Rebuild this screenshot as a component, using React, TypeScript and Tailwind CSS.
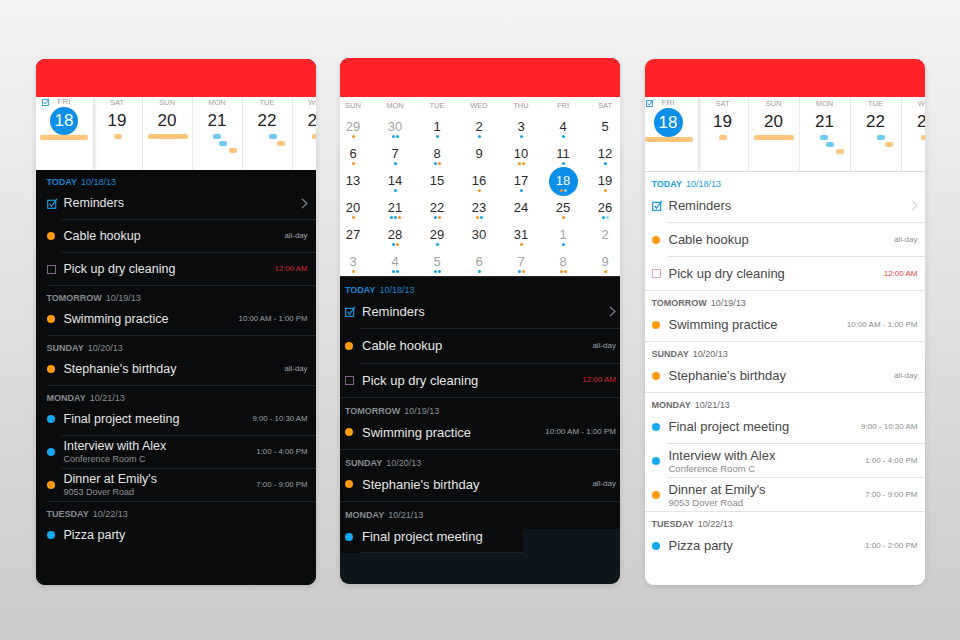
import React from 'react';

type Theme = 'dark' | 'light';
type Mark = 'orange' | 'blue' | 'check' | 'box';

interface Item {
  mark: Mark;
  title: string;
  sub?: string;
  time?: string;
  alarm?: boolean;
  chevron?: boolean;
}

interface Section {
  day: string;
  date: string;
  today?: boolean;
  items: Item[];
}

interface ListStyle {
  theme: Theme;
  pad: string;
  full: string;
  inset: string;
  rowH: string;
  head: string;
  title: string;
  sub: string;
  time: string;
}

const AGENDA: Section[] = [
  {
    day: 'TODAY',
    date: '10/18/13',
    today: true,
    items: [
      { mark: 'check', title: 'Reminders', chevron: true },
      { mark: 'orange', title: 'Cable hookup', time: 'all-day' },
      { mark: 'box', title: 'Pick up dry cleaning', time: '12:00 AM', alarm: true },
    ],
  },
  { day: 'TOMORROW', date: '10/19/13', items: [{ mark: 'orange', title: 'Swimming practice', time: '10:00 AM - 1:00 PM' }] },
  { day: 'SUNDAY', date: '10/20/13', items: [{ mark: 'orange', title: "Stephanie's birthday", time: 'all-day' }] },
  {
    day: 'MONDAY',
    date: '10/21/13',
    items: [
      { mark: 'blue', title: 'Final project meeting', time: '9:00 - 10:30 AM' },
      { mark: 'blue', title: 'Interview with Alex', sub: 'Conference Room C', time: '1:00 - 4:00 PM' },
      { mark: 'orange', title: "Dinner at Emily's", sub: '9053 Dover Road', time: '7:00 - 9:00 PM' },
    ],
  },
  { day: 'TUESDAY', date: '10/22/13', items: [{ mark: 'blue', title: 'Pizza party', time: '1:00 - 2:00 PM' }] },
];

// the dark week view cuts the last time off
const AGENDA_LEFT: Section[] = AGENDA.map((s, i) =>
  i === AGENDA.length - 1 ? { ...s, items: [{ mark: 'blue', title: 'Pizza party' }] } : s
);

const LEFT: ListStyle = {
  theme: 'dark',
  pad: 'pl-[11px] pr-[8px]',
  full: 'ml-[11px]',
  inset: 'ml-[26px]',
  rowH: 'h-[32px]',
  head: 'h-[17px] pt-[7px] pl-[11px]',
  title: 'text-[12.5px]',
  sub: 'text-[9px]',
  time: 'text-[7.8px]',
};

const MID: ListStyle = {
  theme: 'dark',
  pad: 'pl-[5px] pr-[4px]',
  full: 'ml-0',
  inset: 'ml-[20px]',
  rowH: 'h-[33.5px]',
  head: 'h-[17.5px] pt-[7.5px] pl-[5px]',
  title: 'text-[13px]',
  sub: 'text-[9.5px]',
  time: 'text-[8px]',
};

const RIGHT: ListStyle = {
  theme: 'light',
  pad: 'pl-[7px] pr-[7px]',
  full: 'ml-0',
  inset: 'ml-[22px]',
  rowH: 'h-[33px]',
  head: 'h-[17px] pt-[7px] pl-[7px]',
  title: 'text-[13px]',
  sub: 'text-[9.5px]',
  time: 'text-[8px]',
};

interface Chip {
  c: 'o' | 'b';
  x: number;
  w: number;
  r: number;
}

interface WeekDay {
  label: string;
  num: number;
  chips: Chip[];
}

const WEEK: WeekDay[] = [
  { label: 'SAT', num: 19, chips: [{ c: 'o', x: 21, w: 8, r: 0 }] },
  { label: 'SUN', num: 20, chips: [{ c: 'o', x: 5, w: 40, r: 0 }] },
  {
    label: 'MON',
    num: 21,
    chips: [
      { c: 'b', x: 20, w: 8, r: 0 },
      { c: 'b', x: 26, w: 8, r: 1 },
      { c: 'o', x: 36, w: 8, r: 2 },
    ],
  },
  {
    label: 'TUE',
    num: 22,
    chips: [
      { c: 'b', x: 26, w: 8, r: 0 },
      { c: 'o', x: 34, w: 8, r: 1 },
    ],
  },
  {
    label: 'WED',
    num: 23,
    chips: [
      { c: 'o', x: 19, w: 8, r: 0 },
      { c: 'b', x: 24, w: 8, r: 1 },
    ],
  },
];

// [day, dots, muted?, selected?]  o = orange, b = blue, l = pale blue
type Cell = [number, string, number?, number?];

const MONTH: Cell[][] = [
  [[29, 'o', 1], [30, 'bb', 1], [1, 'b'], [2, 'b'], [3, 'b'], [4, 'b'], [5, '']],
  [[6, 'o'], [7, 'b'], [8, 'bo'], [9, ''], [10, 'oo'], [11, 'b'], [12, 'b']],
  [[13, ''], [14, 'b'], [15, ''], [16, 'o'], [17, 'b'], [18, 'ol', 0, 1], [19, 'o']],
  [[20, 'o'], [21, 'bbo'], [22, 'bo'], [23, 'ob'], [24, ''], [25, 'o'], [26, 'bl']],
  [[27, ''], [28, 'bo'], [29, 'b'], [30, ''], [31, 'o'], [1, 'b', 1], [2, '', 1]],
  [[3, 'o', 1], [4, 'bb', 1], [5, 'bb', 1], [6, 'b', 1], [7, 'bo', 1], [8, 'oo', 1], [9, 'o', 1]],
];

const WEEKDAYS = ['SUN', 'MON', 'TUE', 'WED', 'THU', 'FRI', 'SAT'];

const DOT_COLOR: Record<string, string> = {
  o: 'bg-[#f7951d]',
  b: 'bg-[#0ea5ec]',
  l: 'bg-[#8fd3f4]',
};

function CheckIcon({ size = 11 }: { size?: number }) {
  return (
    <svg width={size} height={size} viewBox="0 0 11 11" className="block">
      <rect x="0.7" y="2.3" width="8" height="8" fill="none" stroke="#1b93dc" strokeWidth="1.2" />
      <path d="M2.6 5.9 L4.5 8.3 L9.9 0.9" fill="none" stroke="#1b93dc" strokeWidth="1.3" />
    </svg>
  );
}

function MarkIcon({ mark, theme }: { mark: Mark; theme: Theme }) {
  if (mark === 'orange') return <span className="block w-[8px] h-[8px] rounded-full bg-[#fd9a0e]" />;
  if (mark === 'blue') return <span className="block w-[8px] h-[8px] rounded-full bg-[#13a8f0]" />;
  if (mark === 'check') return <CheckIcon />;
  return (
    <span
      className={`block w-[9px] h-[9px] border border-solid ${theme === 'dark' ? 'border-[#7d6480]' : 'border-[#dba3c6]'}`}
    />
  );
}

function Row({ item, s, sep }: { item: Item; s: ListStyle; sep: 'inset' | 'full' | 'none' }) {
  const dark = s.theme === 'dark';
  const line = dark ? 'bg-[#1b242b]' : 'bg-[#e3e3e3]';
  return (
    <div>
      <div className={`flex items-center ${s.rowH} ${s.pad}`}>
        <div className="w-[17px] shrink-0 flex items-center">
          <MarkIcon mark={item.mark} theme={s.theme} />
        </div>
        <div className="flex-1 min-w-0 flex flex-col justify-center">
          <div className={`${s.title} leading-[15px] whitespace-nowrap ${dark ? 'text-[#e6e6e6]' : 'text-[#474747]'}`}>
            {item.title}
          </div>
          {item.sub && (
            <div className={`${s.sub} leading-[11px] whitespace-nowrap ${dark ? 'text-[#8e9297]' : 'text-[#8a8a8a]'}`}>
              {item.sub}
            </div>
          )}
        </div>
        {item.time && (
          <div
            className={`${s.time} whitespace-nowrap ${
              item.alarm ? (dark ? 'text-[#d8262b]' : 'text-[#ea3a3f]') : dark ? 'text-[#9ea2a7]' : 'text-[#8d8d8d]'
            }`}
          >
            {item.time}
          </div>
        )}
        {item.chevron && (
          <svg width="7" height="11" viewBox="0 0 7 11" className="block">
            <path
              d="M1 0.8 L6 5.5 L1 10.2"
              fill="none"
              stroke={dark ? '#8c8f93' : '#d2d2d2'}
              strokeWidth="1.1"
            />
          </svg>
        )}
      </div>
      {sep === 'inset' && <div className={`h-px ${s.inset} ${line}`} />}
      {sep === 'full' && <div className={`h-px ${s.full} ${line}`} />}
    </div>
  );
}

function Header({ sec, s }: { sec: Section; s: ListStyle }) {
  const dark = s.theme === 'dark';
  const color = sec.today
    ? dark
      ? 'text-[#1685d2]'
      : 'text-[#1ca0e0]'
    : dark
      ? 'text-[#868b91]'
      : 'text-[#6b6b6b]';
  return (
    <div className={`${s.head} text-[9px] leading-[10px] whitespace-nowrap ${color}`}>
      <span className="font-bold">{sec.day}</span>
      <span className="ml-[4px]">{sec.date}</span>
    </div>
  );
}

function Agenda({ sections, s, endSep }: { sections: Section[]; s: ListStyle; endSep?: boolean }) {
  return (
    <div>
      {sections.map((sec, si) => (
        <div key={sec.day}>
          <Header sec={sec} s={s} />
          {sec.items.map((item, ii) => {
            const lastItem = ii === sec.items.length - 1;
            const lastSec = si === sections.length - 1;
            const sep = !lastItem ? 'inset' : !lastSec || endSep ? 'full' : 'none';
            return <Row key={item.title} item={item} s={s} sep={sep} />;
          })}
        </div>
      ))}
    </div>
  );
}

function Chips({ chips }: { chips: Chip[] }) {
  return (
    <div className="flex flex-col gap-[2px]">
      {[0, 1, 2].map((r) => (
        <div key={r} className="flex h-[5px]">
          {chips
            .filter((c) => c.r === r)
            .map((c, i) => (
              <span
                key={i}
                style={{ marginLeft: c.x, width: c.w }}
                className={`block h-[5px] rounded-[2px] ${c.c === 'o' ? 'bg-[#fdc57b]' : 'bg-[#6fcbf3]'}`}
              />
            ))}
        </div>
      ))}
    </div>
  );
}

function WeekStrip({ light }: { light?: boolean }) {
  return (
    <div className={`flex shrink-0 bg-white overflow-hidden ${light ? 'h-[75px] border-b border-[#dedede]' : 'h-[73px]'}`}>
      <div
        className={`relative z-10 shrink-0 h-full bg-white flex flex-col items-center shadow-[2px_0_3px_rgba(0,0,0,0.13)] ${
          light ? 'w-[53px] pr-[6px]' : 'w-[57px]'
        }`}
      >
        <div className={`absolute ${light ? 'left-[1px] top-[2px]' : 'left-[6px] top-[1px]'}`}>
          <CheckIcon size={8} />
        </div>
        <div className={`h-[9px] text-[8px] leading-[9px] text-[#9d9d9d] ${light ? 'mt-[1px]' : ''}`}>FRI</div>
        <div
          className={`mt-[1px] rounded-full bg-[#0b8fe8] text-white text-[17px] flex items-center justify-center ${
            light ? 'w-[29px] h-[29px]' : 'w-[28px] h-[28px]'
          }`}
        >
          18
        </div>
        <div className={`self-start w-[48px] h-[5px] rounded-[2px] bg-[#fdc57b] ${light ? 'ml-0' : 'ml-[4px]'}`} />
      </div>
      {WEEK.map((d) => (
        <div
          key={d.label}
          className={`shrink-0 h-full border-r border-[#ebebeb] flex flex-col ${light ? 'w-[51px] pt-[2px]' : 'w-[50px] pt-[1px]'}`}
        >
          <div className="h-[10px] text-center text-[7.5px] leading-[10px] text-[#a0a0a0]">{d.label}</div>
          <div className="mt-[3px] text-center text-[17px] leading-[20px] text-[#242424]">{d.num}</div>
          <div className="mt-[3px]">
            <Chips chips={d.chips} />
          </div>
        </div>
      ))}
    </div>
  );
}

function Dots({ dots }: { dots: string }) {
  return (
    <div className="flex gap-[1px] h-[3px] mt-[1px]">
      {dots.split('').map((d, i) => (
        <span key={i} className={`block w-[3px] h-[3px] rounded-full ${DOT_COLOR[d]}`} />
      ))}
    </div>
  );
}

function MonthGrid() {
  return (
    <div className="shrink-0 bg-white pr-[2px] border-b border-[#2a2a2a]">
      <div className="flex justify-between h-[17px] items-center">
        {WEEKDAYS.map((w) => (
          <div key={w} className="w-[26px] text-center text-[7.5px] text-[#9c9c9c]">
            {w}
          </div>
        ))}
      </div>
      {MONTH.map((row, ri) => (
        <div key={ri} className="flex justify-between h-[27px]">
          {row.map(([num, dots, muted, sel], ci) => (
            <div key={ci} className={`w-[26px] flex flex-col items-center ${sel ? '' : 'pt-[6px]'}`}>
              {sel ? (
                <div className="-mt-px w-[29px] h-[29px] shrink-0 rounded-full bg-[#0b8fe8] flex flex-col items-center pt-[7px]">
                  <div className="text-[13px] leading-[14px] text-white">{num}</div>
                  <Dots dots={dots} />
                </div>
              ) : (
                <>
                  <div className={`text-[13px] leading-[14px] ${muted ? 'text-[#a2a2a2]' : 'text-[#2b2b2b]'}`}>{num}</div>
                  <Dots dots={dots} />
                </>
              )}
            </div>
          ))}
        </div>
      ))}
    </div>
  );
}

function Phone({ children, bg, top }: { children: React.ReactNode; bg: string; top?: string }) {
  return (
    <div
      className={`w-[280px] h-[526px] shrink-0 rounded-[9px] overflow-hidden flex flex-col shadow-[0_2px_6px_rgba(0,0,0,0.12)] ${bg} ${
        top ?? ''
      }`}
    >
      <div className="h-[38px] shrink-0 bg-[#ff2226]" />
      {children}
    </div>
  );
}

export default function App() {
  return (
    <div className="w-[960px] h-[640px] overflow-hidden bg-linear-to-b from-[#f4f4f4] to-[#cbcbcb] flex justify-center items-start gap-[24.5px] pt-[59px] font-['Liberation_Sans',Arial,sans-serif]">
      <Phone bg="bg-[#0a0b0d]">
        <WeekStrip />
        <div className="flex-1 bg-[#0a0b0d]">
          <Agenda sections={AGENDA_LEFT} s={LEFT} />
        </div>
      </Phone>

      <Phone bg="bg-[#0d161a]" top="-mt-px">
        <div className="h-px bg-[#ff2226] shrink-0" />
        <MonthGrid />
        <div className="bg-[#0a0b0d]">
          <Agenda sections={AGENDA.slice(0, 3)} s={MID} endSep />
          <Header sec={AGENDA[3]} s={MID} />
        </div>
        <div className="relative h-[34px]">
          <div className="h-[9.5px] bg-[#0a0b0d]" />
          <div className="w-[183px] h-[24px] bg-[#0a0b0d] flex items-end">
            <div className="ml-[20px] flex-1 h-px bg-[#1b242b]" />
          </div>
          <div className="absolute inset-0 flex items-center pl-[5px]">
            <div className="w-[17px] shrink-0 flex items-center">
              <MarkIcon mark="blue" theme="dark" />
            </div>
            <div className="text-[13px] leading-[15px] text-[#e6e6e6] whitespace-nowrap">Final project meeting</div>
          </div>
        </div>
      </Phone>

      <Phone bg="bg-white">
        <WeekStrip light />
        <div className="flex-1 bg-white">
          <Agenda sections={AGENDA} s={RIGHT} />
        </div>
      </Phone>
    </div>
  );
}
